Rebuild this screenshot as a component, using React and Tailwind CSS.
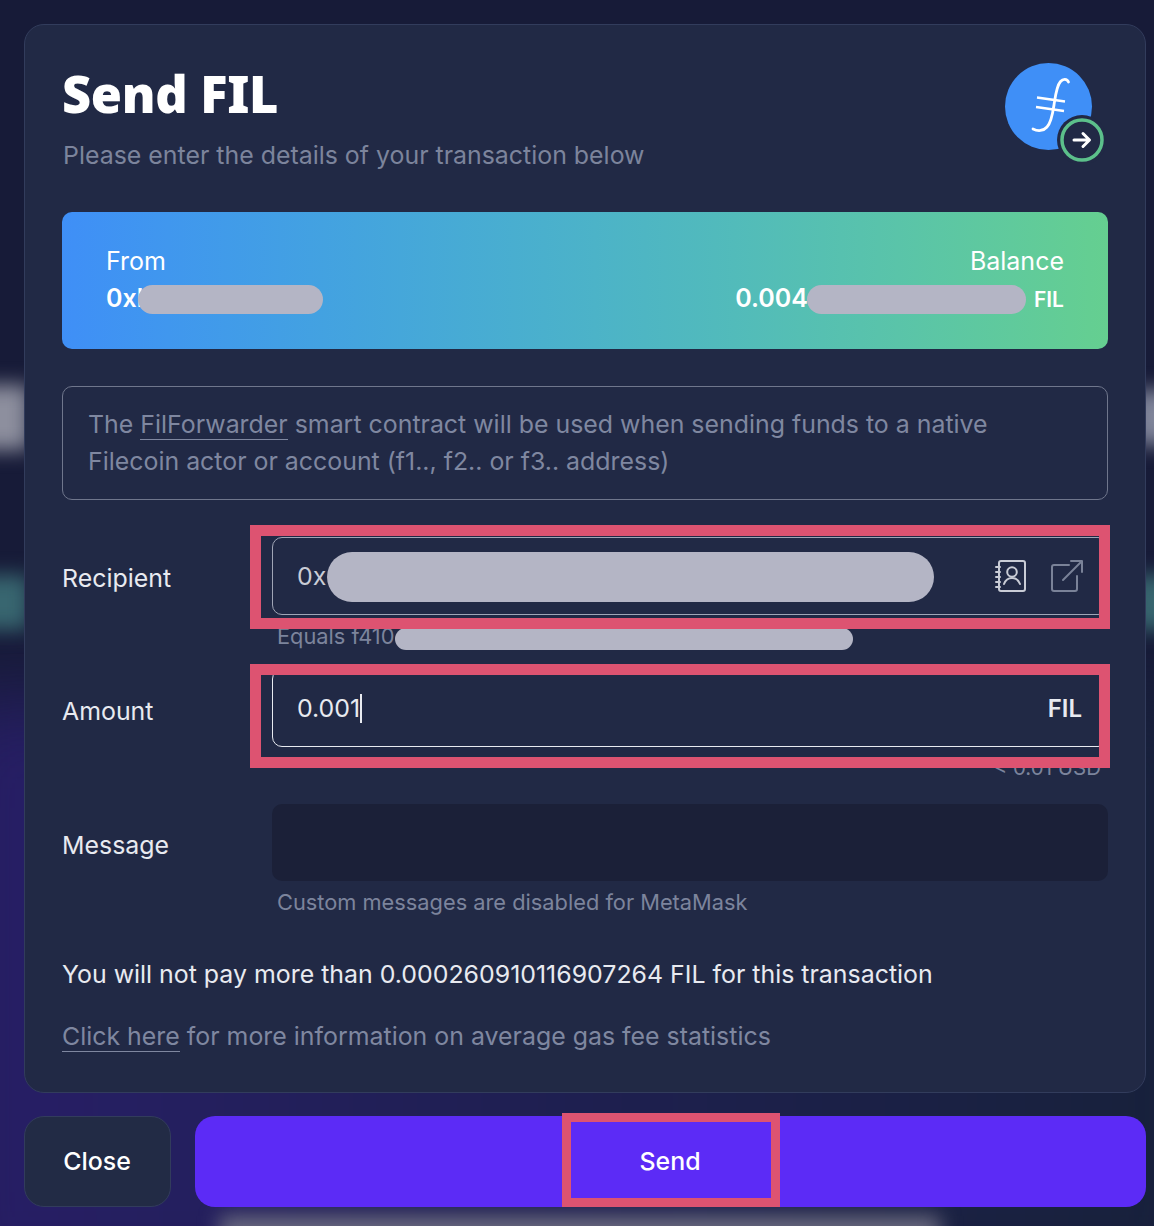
import React from "react";

const inter = { fontFamily: "Inter, sans-serif" };

function Pill({ className }) {
  return <span className={"absolute rounded-full bg-[#b4b5c5] " + className} />;
}

function FilIcon() {
  return (
    <div className="relative w-[100px] h-[100px] shrink-0">
      <svg width="100" height="100" viewBox="0 0 100 100" fill="none">
        <circle cx="43.5" cy="43.5" r="43.5" fill="#3f8ff7" />
        <path d="M63.500 19C62 15.500 58 15.500 55.500 18.500C51.500 23 50.500 32 49 42C47.500 52 46 60 42 64C38.500 68 33 68.500 28 66" stroke="#fff" strokeWidth="2.800" strokeLinecap="round" />
        <path d="M32 34.500 60 38.500M31 44 59 48" stroke="#fff" strokeWidth="2.400" />
        <circle cx="77" cy="77" r="25" fill="#212945" />
        <circle cx="77" cy="77" r="20" fill="#212945" stroke="#5cc08b" strokeWidth="3.500" />
        <path d="M69 77h15M78 70.500l6.500 6.500-6.500 6.500" stroke="#fff" strokeWidth="3" strokeLinecap="round" strokeLinejoin="round" />
      </svg>
    </div>
  );
}

function BookIcon() {
  return (
    <svg width="32" height="34" viewBox="0 0 32 34" fill="none" stroke="#c9ccd6" strokeWidth="2" strokeLinecap="round">
      <rect x="4" y="2" width="26" height="30" rx="2" />
      <path d="M1 8h4M1 13h4M1 18h4M1 23h4M1 28h4" />
      <circle cx="17" cy="13" r="4.800" />
      <path d="M9 25c1.500-4 4.500-6 8-6s6.500 2 8 6" />
    </svg>
  );
}

function ExternalIcon() {
  return (
    <svg width="34" height="34" viewBox="0 0 34 34" fill="none" stroke="#7a8298" strokeWidth="2" strokeLinecap="round" strokeLinejoin="round">
      <path d="M19 6H4a2 2 0 0 0-2 2v22a2 2 0 0 0 2 2h21a2 2 0 0 0 2-2V17" />
      <path d="M13 21 32 2M21 2h11v11" />
    </svg>
  );
}

function Highlight({ className }) {
  return <div className={"absolute pointer-events-none border-[11px] border-[#dd5371] " + className} />;
}

export default function App() {
  return (
    <div className="relative w-[1154px] h-[1226px] overflow-hidden bg-[#171b38]" style={inter}>
      <div className="absolute left-[-60px] top-[700px] w-[1274px] h-[600px] bg-gradient-to-r from-[#281e68] via-[#1e1f50] to-[#17213a] blur-[40px]" />
      <div className="absolute left-[-30px] top-[385px] w-[60px] h-[65px] bg-[#8d8f9e] blur-[10px]" />
      <div className="absolute left-[-30px] top-[575px] w-[60px] h-[55px] bg-[#386670] blur-[10px]" />
      <div className="absolute left-[1130px] top-[390px] w-[60px] h-[55px] bg-[#80859a] blur-[10px]" />
      <div className="absolute left-[1130px] top-[575px] w-[60px] h-[55px] bg-[#386670] blur-[10px]" />
      <div className="absolute left-[220px] top-[1216px] w-[720px] h-[30px] bg-[#6c6c80] blur-[10px]" />

      <div className="relative flex flex-col pt-6 pl-6 pr-2 w-full">
        <div className="h-[1069px] flex flex-col rounded-[20px] border border-[#323c5c] bg-[#212945] px-[37px]">
          <div className="flex justify-between pt-[37px] h-[187px]">
            <div>
              <h1 className="text-[50.500px] leading-[64px] font-black text-white tracking-[-0.3px]" style={{ fontFamily: "'Noto Sans', sans-serif" }}>Send FIL</h1>
              <p className="text-[24.900px] leading-[32px] mt-[13px] pl-[1px] text-[#7c849c]">Please enter the details of your transaction below</p>
            </div>
            <div className="mr-[3px] mt-[1px]"><FilIcon /></div>
          </div>

          <div className="h-[137px] rounded-[10px] bg-gradient-to-r from-[#3f8ff7] to-[#65cf90] flex justify-between items-center px-11">
            <div className="mt-[-2px]">
              <div className="text-[25px] leading-[32px] text-white">From</div>
              <div className="relative text-[25px] leading-[32px] mt-[5px] font-semibold text-white">
                0xl
                <Pill className="left-[32px] top-[3px] w-[185px] h-[29px]" />
              </div>
            </div>
            <div className="text-right">
              <div className="text-[25px] leading-[32px] text-white">Balance</div>
              <div className="relative text-[25px] leading-[32px] mt-[5px] font-semibold text-white">
                0.004<span className="inline-block w-[226px]" /><span className="text-[21px]">FIL</span>
                <Pill className="left-[72px] top-[3px] w-[219px] h-[29px]" />
              </div>
            </div>
          </div>

          <div className="mt-[37px] h-[114px] rounded-[10px] border border-[#6f768c] pl-[25px] pt-[19px] text-[24.900px] leading-[37px] text-[#7f87a0]">
            The <span className="border-b border-[#7f87a0]">FilForwarder</span> smart contract will be used when sending funds to a native<br />
            Filecoin actor or account (f1.., f2.. or f3.. address)
          </div>

          <div className="relative mt-[37px] flex">
            <label className="w-[210px] pt-[25px] text-[24.900px] leading-[32px] text-[#e8eaf0]">Recipient</label>
            <div className="flex-1">
              <div className="relative h-[78px] rounded-[10px] border border-[#a0a5b6] flex items-center pl-[24px] pr-[5px] text-[24.900px] text-[#c9ccd6]">
                <span className="pt-[1px]">0x</span>
                <Pill className="left-[54px] top-[14px] w-[607px] h-[50px]" />
                <div className="ml-auto flex items-center gap-[23px] mr-[18px]">
                  <BookIcon />
                  <ExternalIcon />
                </div>
              </div>
              <div className="relative pl-[5px] h-[32px] leading-[32px] mt-[5px] text-[21.800px] text-[#7c849c]">
                Equals f410
                <Pill className="left-[123px] top-[8px] w-[458px] h-[22px]" />
              </div>
            </div>
            <Highlight className="left-[188px] top-[-12px] w-[860px] h-[104px]" />
          </div>

          <div className="relative mt-[17px] flex">
            <label className="w-[210px] pt-[26px] text-[24.900px] leading-[32px] text-[#e8eaf0]">Amount</label>
            <div className="flex-1">
              <div className="relative h-[78px] rounded-[10px] border border-[#e8eaf0] flex items-center justify-between pl-[24px] pr-[24px] text-[#e8eaf0]">
                <span className="text-[24.900px] pt-[1px] flex items-center">0.001<span className="w-[2px] h-[29px] bg-[#e8eaf0]" /></span>
                <span className="text-[24px] font-semibold pr-[1px] pt-[1px]">FIL</span>
              </div>
              <div className="h-[30px] leading-[42px] pr-[7px] text-right text-[20.500px] text-[#7c849c]">&lt; 0.01 USD</div>
            </div>
            <Highlight className="left-[188px] top-[-5px] w-[860px] h-[104px]" />
          </div>

          <div className="mt-[27px] flex">
            <label className="w-[210px] pt-[25px] text-[24.900px] leading-[32px] text-[#e8eaf0]">Message</label>
            <div className="flex-1">
              <div className="h-[77px] rounded-[10px] bg-[#1b2038]" />
              <div className="pl-[5px] mt-[5px] leading-[32px] text-[21.800px] text-[#7c849c]">Custom messages are disabled for MetaMask</div>
            </div>
          </div>

          <p className="mt-[40px] text-[24.900px] leading-[32px] text-[#e8eaf0]">You will not pay more than 0.000260910116907264 FIL for this transaction</p>
          <p className="mt-[30px] text-[24.900px] leading-[32px] text-[#7f87a0]"><span className="border-b border-[#7f87a0]">Click here</span> for more information on average gas fee statistics</p>
        </div>

        <div className="mt-[23px] flex gap-[24px] h-[91px]">
          <button className="w-[147px] rounded-[20px] border border-[#323c5c] bg-[#222b45] pr-[1px] text-[24.900px] font-medium text-white">Close</button>
          <button className="relative flex-1 rounded-[20px] bg-[#5c2bf6] pr-[1px] text-[24.900px] font-medium text-white">
            Send
            <span className="absolute left-[367px] top-[-3px] w-[218px] h-[94px] border-[9px] border-[#dd5371]" />
          </button>
        </div>
      </div>
    </div>
  );
}
